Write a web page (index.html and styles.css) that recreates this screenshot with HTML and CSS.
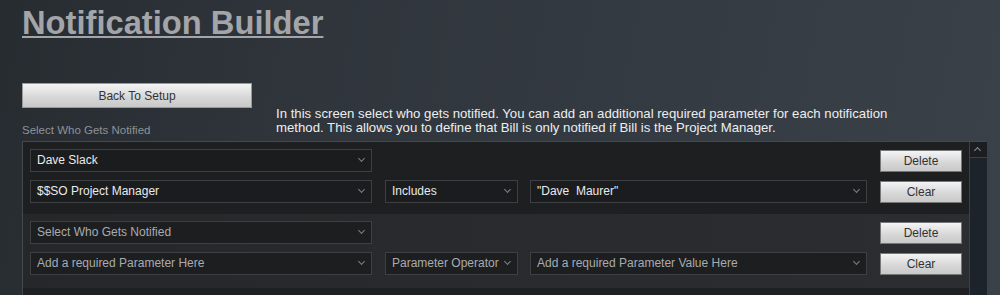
FILE: index.html
```html
<!DOCTYPE html>
<html>
<head>
<meta charset="utf-8">
<link rel="stylesheet" href="styles.css">
</head>
<body>
<div class="page">
  <h1 class="title">Notification Builder</h1>
  <div class="intro">
    <div class="intro-left">
      <button class="btn btn-back">Back To Setup</button>
      <div class="label">Select Who Gets Notified</div>
    </div>
    <p class="desc">In this screen select who gets notified. You can add an additional required parameter for each notification method. This allows you to define that Bill is only notified if Bill is the Project Manager.</p>
  </div>
  <div class="panel">
    <div class="list">
      <div class="group group-dark">
        <div class="row">
          <div class="select sel-who filled">Dave Slack<span class="chev"></span></div>
          <div class="spacer"></div>
          <button class="btn btn-small">Delete</button>
        </div>
        <div class="row">
          <div class="select sel-who filled">$$SO Project Manager<span class="chev"></span></div>
          <div class="select sel-op filled">Includes<span class="chev"></span></div>
          <div class="select sel-val filled">"Dave&nbsp; Maurer"<span class="chev"></span></div>
          <button class="btn btn-small">Clear</button>
        </div>
      </div>
      <div class="group group-light">
        <div class="row">
          <div class="select sel-who">Select Who Gets Notified<span class="chev"></span></div>
          <div class="spacer"></div>
          <button class="btn btn-small">Delete</button>
        </div>
        <div class="row">
          <div class="select sel-who">Add a required Parameter Here<span class="chev"></span></div>
          <div class="select sel-op">Parameter Operator<span class="chev"></span></div>
          <div class="select sel-val">Add a required Parameter Value Here<span class="chev"></span></div>
          <button class="btn btn-small">Clear</button>
        </div>
      </div>
    </div>
    <div class="scrollbar">
      <div class="scroll-up"><span class="up-arrow"></span></div>
      <div class="scroll-track"></div>
    </div>
  </div>
</div>
</body>
</html>
```
FILE: styles.css
```css
html, body {
  margin: 0;
  padding: 0;
  height: 100%;
}
body {
  font-family: "Liberation Sans", Arial, sans-serif;
  background: linear-gradient(100deg, #272c31 0%, #2f353b 30%, #343a41 60%, #3b4149 100%);
  overflow: hidden;
}
.page {
  padding: 0 0 0 22px;
  width: 965px;
}
.title {
  margin: 0;
  padding-top: 5px;
  font-size: 32.7px;
  line-height: 36px;
  font-weight: bold;
  color: #a3a5a8;
  text-decoration: underline;
  text-decoration-thickness: 2px;
  text-underline-offset: 2px;
  height: 36px;
}
.intro {
  display: flex;
  align-items: flex-end;
  margin-top: 42px;
}
.intro-left {
  width: 254px;
  flex: none;
}
.btn {
  font-family: "Liberation Sans", Arial, sans-serif;
  border: 1px solid #8c8c8c;
  background: linear-gradient(#f4f4f4, #d6d6d6 60%, #c9c9c9);
  color: #333;
  padding: 0;
  cursor: pointer;
  display: block;
}
.btn-back {
  width: 230px;
  height: 25px;
  font-size: 12px;
  border-color: #9a9a9a;
}
.label {
  margin-top: 15px;
  font-size: 11.5px;
  color: #8d9297;
  height: 18px;
  line-height: 14px;
}
.desc {
  margin: 0 0 6px 0;
  font-size: 13.2px;
  line-height: 14px;
  color: #eceeef;
  width: 650px;
}
.panel {
  display: flex;
  border: 1px solid #45484c;
  width: 964px;
  height: 160px;
  background: #1f2023;
  box-sizing: border-box;
}
.list {
  flex: 1;
}
.group {
  padding: 7px 7px 11px 7px;
  display: flex;
  flex-direction: column;
  gap: 8px;
}
.group-dark {
  background: #1e1f21;
  height: 54px;
}
.group-light {
  background: linear-gradient(90deg, #262729, #2a2b2e 60%, #2b2d30);
  height: 54px;
  padding-top: 7px;
  padding-bottom: 13px;
}
.row {
  display: flex;
  align-items: center;
  gap: 0;
  height: 23px;
}
.select {
  position: relative;
  box-sizing: border-box;
  height: 23px;
  border: 1px solid #3e3f42;
  background: #1b1c1e;
  color: #a9abae;
  font-size: 12px;
  line-height: 21px;
  padding-left: 6px;
  white-space: nowrap;
  overflow: hidden;
}
.select.filled {
  color: #e9eaeb;
}
.group-light .select {
  background: #1d1e20;
}
.chev {
  position: absolute;
  right: 7px;
  top: 6px;
  width: 4px;
  height: 4px;
  border-right: 1px solid #7d8083;
  border-bottom: 1px solid #7d8083;
  transform: rotate(45deg);
}
.sel-who {
  width: 342px;
}
.sel-op {
  width: 133px;
  margin-left: 13px;
}
.sel-val {
  width: 337px;
  margin-left: 12px;
}
.spacer {
  width: 495px;
}
.btn-small {
  width: 82px;
  height: 22px;
  font-size: 12px;
  margin-left: 13px;
  border-color: #777;
}
.scrollbar {
  width: 17px;
  flex: none;
  display: flex;
  flex-direction: column;
  border-left: 1px solid #3d4044;
}
.scroll-up {
  height: 15px;
  background: #1b1d20;
  border-bottom: 1px solid #3d4044;
  position: relative;
}
.up-arrow {
  position: absolute;
  left: 5px;
  top: 6px;
  width: 4px;
  height: 4px;
  border-left: 1px solid #8a8c8f;
  border-top: 1px solid #8a8c8f;
  transform: rotate(45deg);
}
.scroll-track {
  flex: 1;
  background: #1d232a;
}
```
